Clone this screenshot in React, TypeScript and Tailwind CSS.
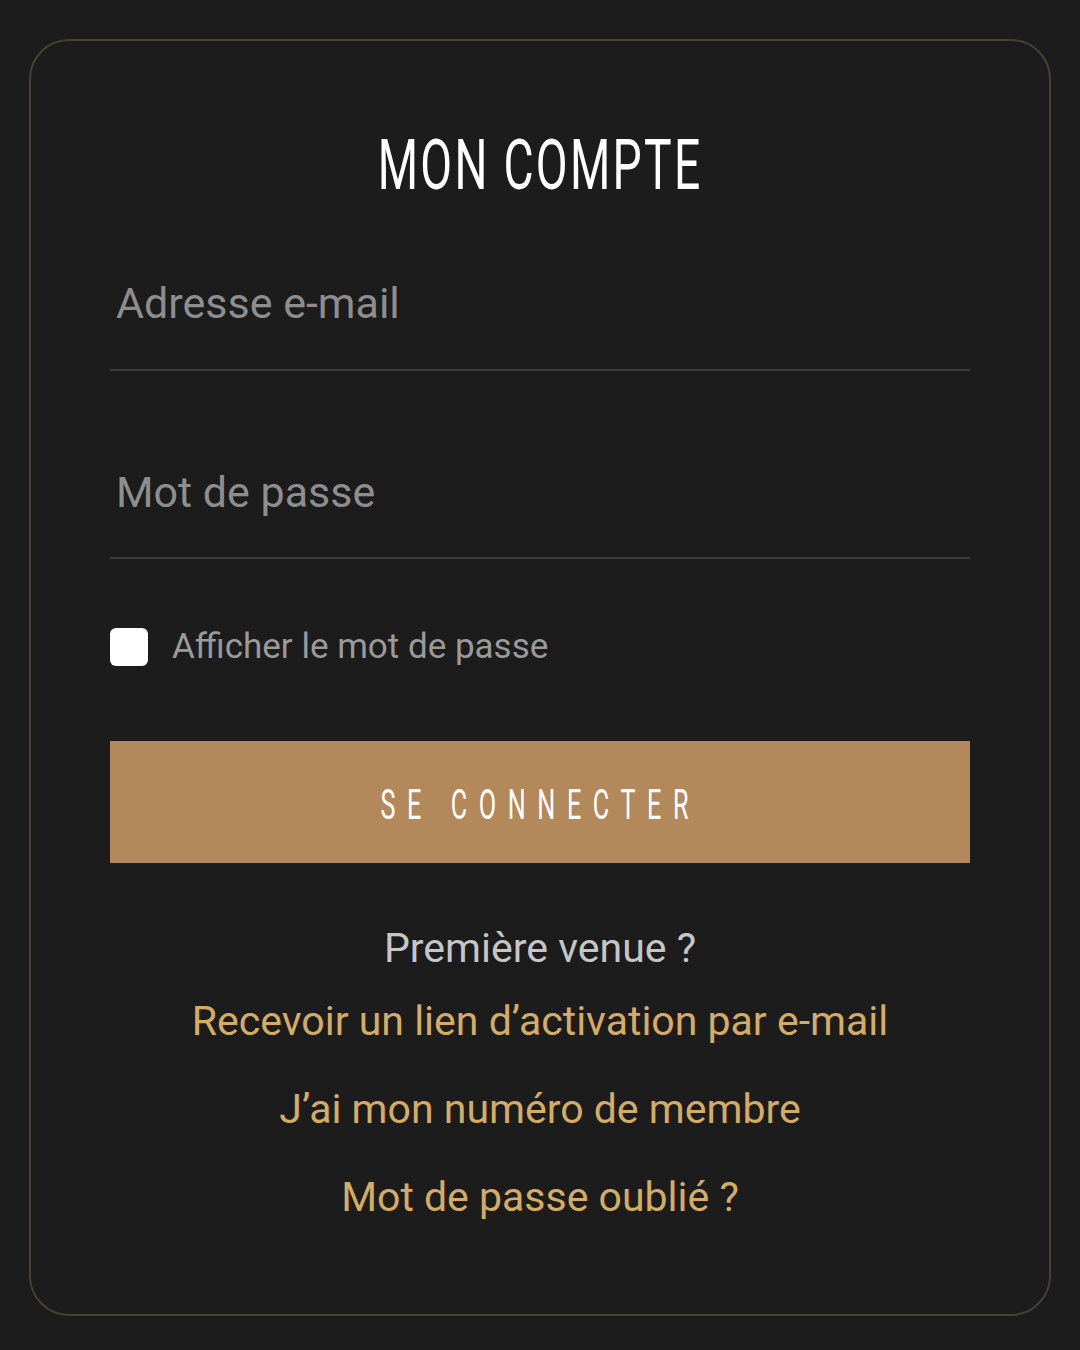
// Écran de connexion "Mon compte" (thème sombre, accents dorés).
const LINKS = [
  { id: "activation", label: "Recevoir un lien d’activation par e-mail", gap: "mt-[17px]" },
  { id: "membre", label: "J’ai mon numéro de membre", gap: "mt-[32px]" },
  { id: "oubli", label: "Mot de passe oublié ?", gap: "mt-[32px]" },
];

const body = "font-['Roboto','Liberation_Sans',sans-serif]";

export default function App() {
  return (
    <div className={`h-[1350px] w-full bg-[#1c1c1d] px-[29px] pt-[39px] ${body}`}>
      <div className="flex h-[1277px] flex-col rounded-[40px] border-2 border-[#46422f] px-[79px]">
        <div className="mt-[84px] flex h-[80px] items-center justify-center">
          <h1 className="scale-x-[0.66] text-[70px] leading-none font-normal tracking-[0.05em] whitespace-nowrap text-white">
            MON COMPTE
          </h1>
        </div>

        <div className="mt-[74px] border-b-2 border-[#3e3e3e] pb-[42px] pl-[6px]">
          <input
            type="email"
            placeholder="Adresse e-mail"
            className="h-[48px] w-full bg-transparent text-[43px] leading-[48px] text-white outline-none placeholder:text-[#8e8e8e]"
          />
        </div>

        <div className="mt-[97px] border-b-2 border-[#3e3e3e] pb-[41px] pl-[6px]">
          <input
            type="password"
            placeholder="Mot de passe"
            className="h-[48px] w-full bg-transparent text-[43px] leading-[48px] text-white outline-none placeholder:text-[#8e8e8e]"
          />
        </div>

        <label className="mt-[69px] flex items-center gap-[24px]">
          <input
            type="checkbox"
            className="h-[38px] w-[38px] shrink-0 appearance-none rounded-[6px] bg-white"
          />
          <span className="text-[35px] leading-[38px] text-[#9a9a9a]">Afficher le mot de passe</span>
        </label>

        <button className="mt-[75px] flex h-[122px] w-full items-center justify-center bg-[#b3895c]">
          <span className="translate-y-[3px] scale-x-[0.6] text-[42px] leading-none tracking-[0.46em] whitespace-nowrap text-white">
            SE CONNECTER
          </span>
        </button>

        <p className="mt-[57px] text-center text-[41px] leading-[56px] text-[#c6c6c6]">Première venue ?</p>
        {LINKS.map((link) => (
          <a
            key={link.id}
            href="#"
            className={`${link.gap} block text-center text-[41px] leading-[56px] text-[#d5ac63]`}
          >
            {link.label}
          </a>
        ))}
      </div>
    </div>
  );
}
